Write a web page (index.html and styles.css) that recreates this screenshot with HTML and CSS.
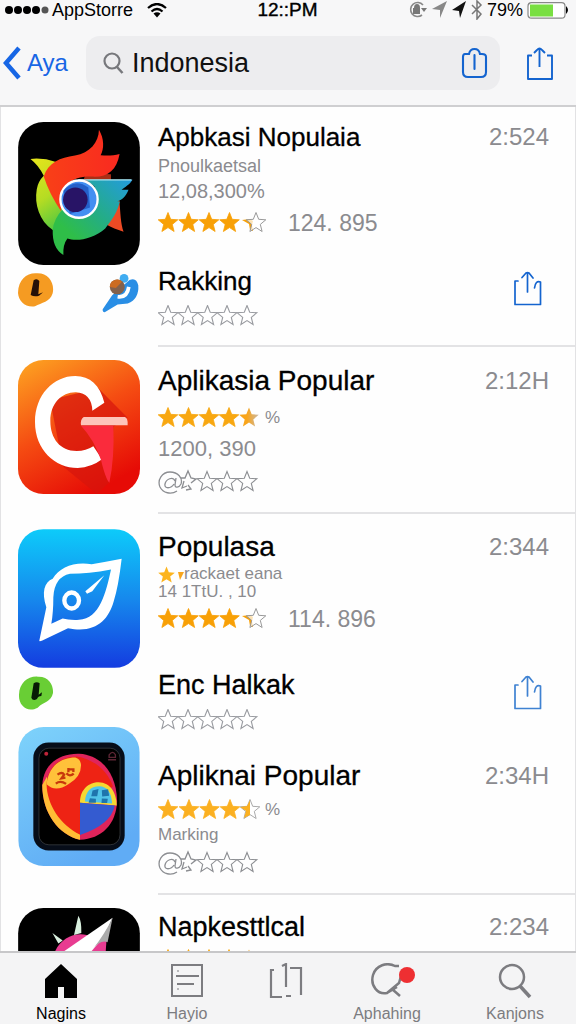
FILE: index.html
```html
<!DOCTYPE html>
<html lang="id">
<head>
<meta charset="utf-8">
<meta name="viewport" content="width=device-width, initial-scale=1">
<title>AppStore</title>
<link rel="stylesheet" href="styles.css">
</head>
<body>
<svg class="defs" aria-hidden="true">
  <defs>
    <path id="star" d="M10 .5 12.7 7.3 19.8 7.8 14.3 12.4 16.1 19.5 10 15.6 3.9 19.5 5.7 12.4 .2 7.8 7.3 7.3Z"/>
    <linearGradient id="fade" x1="0" x2="1"><stop offset=".4" stop-color="#f9a51a"/><stop offset="1" stop-color="#c9b9a8"/></linearGradient>
    <symbol id="rated" viewBox="0 0 110 22">
      <g fill="#f8a006" stroke="#f8a006" stroke-width=".8"><use href="#star"/><use href="#star" x="20.5"/><use href="#star" x="41"/><use href="#star" x="61.500"/></g>
      <path fill="#f8a006" d="M84 8l8-1 3 2-1 4 1 6-3-1-1-6z"/>
      <use href="#star" x="88" fill="#fff" fill-opacity=".7" stroke="#999"/>
    </symbol>
    <symbol id="full" viewBox="0 0 110 22">
      <g fill="#f8a710" stroke="#f8a710" stroke-width=".8"><use href="#star"/><use href="#star" x="20.500"/><use href="#star" x="41"/><use href="#star" x="61"/></g>
      <use href="#star" x="81" fill="url(#fade)"/>
    </symbol>
    <symbol id="most" viewBox="0 0 110 22">
      <g fill="#fbb021" stroke="#fbb021" stroke-width=".8"><use href="#star"/><use href="#star" x="21"/><use href="#star" x="41.500"/><use href="#star" x="62"/></g>
      <use href="#star" x="82" fill="#fff" stroke="#aaa"/>
      <path fill="#fbb021" d="M82 8l7-1 3-6v15l-6 3 2-7z"/>
    </symbol>
    <symbol id="empty" viewBox="0 0 110 22">
      <g fill="#fff" stroke="#999ba0" stroke-width="1.100"><use href="#star"/><use href="#star" x="20"/><use href="#star" x="39.500"/><use href="#star" x="59"/><use href="#star" x="79"/></g>
    </symbol>
    <symbol id="atstars" viewBox="0 0 110 26">
      <g fill="none" stroke="#8c8e92" stroke-width="1.300">
        <path d="M19 22C13 26 5 24 2 18-1 11 4 3 12 3c8 0 13 6 11 12-2 4-6 4-6 1l1-7M17 12c-2-5-9-2-10 3-1 5 6 5 9 0M23 9l4 0 3-7 3 7 5 1-5 4M26 12l-2 7 5-2M30 16l3 4-5 1"/>
        <g stroke-width="1.100"><use href="#star" x="39" y="2"/><use href="#star" x="59" y="2"/><use href="#star" x="79" y="2"/></g>
      </g>
    </symbol>
    <symbol id="upload" viewBox="0 0 30 36">
      <path fill="none" stroke="currentColor" stroke-width="1.700" stroke-linejoin="round" stroke-linecap="round" d="M5 10H2v23.500h25.500V11q-5-2-6 6M14.500 21V2M9 6.500 13 2q1.500-1 3 0l4 5"/>
    </symbol>
  </defs>
</svg>

<div class="app">
  <header class="top">
    <div class="status">
      <div class="status-left">
        <svg width="45" height="10" viewBox="0 0 45 10"><circle cx="4" cy="5" r="4"/><circle cx="13" cy="5" r="4"/><circle cx="22" cy="5" r="4"/><circle cx="31" cy="5" r="4"/><circle cx="40" cy="5" r="3.500" fill="#555"/></svg>
        <span>AppStorre</span>
        <svg class="wifi" width="20" height="15" viewBox="0 0 20 15"><g fill="none" stroke="#000" stroke-width="2.200"><path d="M1 5q9-8 18 0M4.500 8.500q5.500-5 11 0"/></g><path d="M6.500 10.500q3.500-2.500 7 0L10 14.500z"/></svg>
      </div>
      <span class="clock">12::PM</span>
      <div class="status-right">
        <svg width="20" height="18" viewBox="0 0 20 18"><path d="M15 4A7 7 0 1 0 14 14" fill="none" stroke="#888" stroke-width="1.600"/><path d="M13 7h6l-3 4zM5 7h1q0-4 3-4t3 4v6H5z" fill="#777"/></svg>
        <svg width="15" height="18" viewBox="0 0 15 18"><path d="M0 8 15 0 8 17 8 9z" fill="#888"/></svg>
        <svg width="16" height="18" viewBox="0 0 16 18"><path d="M1 9 15 0 9 17 8 10z" fill="#111"/></svg>
        <svg width="12" height="20" viewBox="0 0 12 20"><path d="M1 5 10 14 6 19V1l4 4-9 9" fill="none" stroke="#777" stroke-width="1.500"/></svg>
        <span>79%</span>
        <svg width="43" height="17" viewBox="0 0 43 17"><rect x="1" y=".7" width="37" height="15.500" rx="3.500" fill="#fff" stroke="#888" stroke-width="1.200"/><rect x="3" y="2.500" width="23" height="12" fill="#79df42"/><path d="M39 4q4 4 0 8z"/></svg>
      </div>
    </div>
    <nav class="nav">
      <a class="back" href="#"><svg width="20" height="34" viewBox="0 0 20 34"><path d="M17 2 4 17l13 15" fill="none" stroke="currentColor" stroke-width="4.500"/></svg>Aya</a>
      <div class="search">
        <svg width="21" height="22" viewBox="0 0 21 22"><circle cx="9" cy="9" r="7.500" fill="none" stroke="#77787c" stroke-width="2.200"/><path d="m14 15 5.500 6" stroke="#77787c" stroke-width="2.500"/></svg>
        <input type="text" value="Indonesia" aria-label="Cari">
        <button class="icon-btn" aria-label="Simpan"><svg width="27" height="32" viewBox="0 0 27 32"><path d="M7 7H4Q2 7 2 10v15q0 5 5 5h13q5 0 5-5V10q0-3-4-3h-2q-1-5-5.500-5T8 7zM13.500 8v14" fill="none" stroke="currentColor" stroke-width="2.100" stroke-linecap="round"/></svg></button>
      </div>
      <button class="icon-btn" aria-label="Bagikan"><svg width="28" height="35" viewBox="0 0 28 35"><path d="M6 9.500H2V33h24V9.500h-5M13.500 21V2M8 7l3-3q2.500-3 5 0l3 3" fill="none" stroke="currentColor" stroke-width="1.900" stroke-linejoin="round"/></svg></button>
    </nav>
  </header>

  <main class="list">
    <article class="row">
      <div class="art">
        <svg class="icon" viewBox="54 38 366 430">
          <defs><linearGradient id="bird" x1="0" y1="1" x2="1" y2="0"><stop offset=".25" stop-color="#2fbe48"/><stop offset=".55" stop-color="#24ad84"/><stop offset="1" stop-color="#239be0"/></linearGradient><linearGradient id="lime" x1="0" y1="0" x2="0.500" y2="1"><stop stop-color="#e8e51b"/><stop offset=".5" stop-color="#b5dc23"/><stop offset="1" stop-color="#37c348"/></linearGradient><linearGradient id="flame" x1="1" x2="0"><stop stop-color="#f92a20"/><stop offset="1" stop-color="#f94017"/></linearGradient></defs>
          <rect x="54" y="38" width="366" height="430" rx="76"/>
          <path d="M358 270C362 315 362 340 371 368 350 362 335 355 322 348Z" fill="#ec4a24"/>
          <path d="M255 200q50-8 78-5v25h-85z" fill="#a92e16"/>
          <path d="M91 149Q130 145 168 158L183 180 260 300 245 385 170 372 158 363C118 335 102 285 110 240Q114 217 131 200Q116 168 91 149Z" fill="url(#lime)"/>
          <path d="M398 212C388 228 376 233 365 242H386C377 263 368 271 353 277H360C348 325 322 347 316 358 280 390 230 398 202 388Q188 407 190 438 156 418 158 363 160 330 188 300Q222 340 270 315 307 280 283 231L258 212Z" fill="url(#bird)"/>
          <path d="M131 202C145 160 180 145 225 139 270 130 296 100 297 61 313 88 313 118 302 138 324 140 341 139 359 134 350 185 321 205 275 202 215 200 185 225 183 306Q148 255 131 202Z" fill="url(#flame)"/>
          <path d="M235 212h160" stroke="#a9e4ef" stroke-width="4"/>
          <circle cx="237" cy="270" r="56" fill="#438ff2" stroke="#fff" stroke-width="7"/><path d="M190 245q35-40 75-10l5 60-60 20z" fill="#2460c9"/><circle cx="226" cy="272" r="37" fill="#281466"/>
        </svg>
        <div class="badges">
          <svg width="36" height="36" viewBox="54 490 108 108"><path d="M54 550C55 510 80 490 108 491 145 488 165 520 158 551 150 577 125 579 105 590 75 594 56 575 54 550Z" fill="#f59b22"/><path d="M101 512q10-7 17 2l-3 40 14-6-12 10q-14 4-25-2z" fill="#251008"/></svg>
          <svg width="38" height="40" viewBox="304 494 112 118"><path d="M312 610Q305 610 306 601L334 560 385 515Q405 505 411 530 414 570 380 584L350 587Z" fill="#298ee5"/><path d="M350 564q28 4 33-29" fill="none" stroke="#fff" stroke-width="11"/><circle cx="369" cy="510" r="13" fill="#40acf1"/><circle cx="349" cy="535" r="22" fill="#83614c"/><path d="M327 535a21 21 0 0 1 36-15l-18 18z" fill="#cc6c22"/></svg>
        </div>
      </div>
      <div class="body lined first">
        <div class="line"><h2 class="name">Apbkasi Nopulaia</h2><time class="time">2:524</time></div>
        <p class="sub">Pnoulkaetsal</p>
        <p class="meta">12,08,300%</p>
        <div class="line score"><svg class="stars"><use href="#rated"/></svg><span class="count">124. 895</span></div>
        <div class="extra"><div><h3 class="name">Rakking</h3><svg class="stars"><use href="#empty"/></svg></div><button class="icon-btn" aria-label="Bagikan"><svg class="share"><use href="#upload"/></svg></button></div>
      </div>
    </article>

    <article class="row">
      <div class="art tight">
        <svg class="icon mid" viewBox="54 60 366 402">
          <defs><linearGradient id="red" x1=".1" y1="0" x2=".6" y2="1"><stop stop-color="#fda021"/><stop offset=".5" stop-color="#f54c12"/><stop offset="1" stop-color="#e60b06"/></linearGradient></defs>
          <rect x="54" y="60" width="366" height="402" rx="76" fill="url(#red)"/>
          <path d="M295 145 383 233 340 260 330 425 290 462 190 380 150 180Z" fill="#d5160d" opacity=".7"/>
          <path d="M313 188C300 135 270 108 226 108 160 108 105 165 105 246 105 330 165 384 233 384Q275 382 306 358L280 319Q258 333 230 333C180 333 151 295 151 243 151 190 186 156 228 157Q275 160 277 212Z" fill="#fff"/>
          <path d="M243 257H340Q344 355 328 428 317 418 303 360 283 300 243 257Z" fill="#fa2b3c"/>
          <path d="M251 231H374Q384 232 383 256H243Q240 239 251 231Z" fill="#fdc4ba"/>
        </svg>
      </div>
      <div class="body lined second">
        <div class="line"><h2 class="name">Aplikasia Popular</h2><time class="time">2:12H</time></div>
        <div class="line pct"><svg class="stars"><use href="#full"/></svg><span>%</span></div>
        <p class="meta large">1200, 390</p>
        <svg class="stars at"><use href="#atstars"/></svg>
      </div>
    </article>

    <article class="row">
      <div class="art">
        <svg class="icon tall" viewBox="54 46 366 416">
          <defs><linearGradient id="sky" x1="0" y1="0" x2="0" y2="1"><stop stop-color="#0dcbfa"/><stop offset=".5" stop-color="#1689ed"/><stop offset="1" stop-color="#143ce0"/></linearGradient></defs>
          <rect x="54" y="46" width="366" height="416" rx="76" fill="url(#sky)"/>
          <path d="M365 135Q320 144 275 151C220 143 180 160 158 195 133 205 124 235 139 280L118 380Q117 385 127 380L204 343C285 360 325 320 341 263Q355 220 365 135ZM333 167C318 235 300 315 237 318 215 320 201 316 188 314L154 330Q160 295 160 250 163 190 210 180 265 180 333 167Z" fill="#fff" fill-rule="evenodd"/>
          <ellipse cx="215" cy="260" rx="22" ry="24" fill="none" stroke="#fff" stroke-width="13"/><path d="M313 184 256 232 261 240 277 232Z" fill="#fff"/>
        </svg>
        <div class="badges"><svg width="36" height="36" viewBox="54 484 108 108"><path d="M57 540C58 505 84 484 113 486 146 484 161 511 159 535 153 563 132 560 113 579 83 595 55 574 57 540Z" fill="#69ce35"/><path d="M101 506q9-7 18 0l-3 34 10-7-2 11q-10 0-13 9-13 7-17-4z" fill="#071b05"/></svg></div>
      </div>
      <div class="body third">
        <div class="line"><h2 class="name">Populasa</h2><time class="time">2:344</time></div>
        <p class="sub small"><svg width="26" height="17" viewBox="0 0 26 17"><use href="#star" transform="scale(.85)" fill="#fcb41d"/><path d="M20 6h6l-4 8z" fill="#f8a51c"/></svg>rackaet eana</p>
        <p class="sub small">14 1TtU. , 10</p>
        <div class="line score"><svg class="stars"><use href="#rated"/></svg><span class="count">114. 896</span></div>
        <div class="extra"><div><h3 class="name">Enc Halkak</h3><svg class="stars"><use href="#empty"/></svg></div><button class="icon-btn soft" aria-label="Bagikan"><svg class="share"><use href="#upload"/></svg></button></div>
      </div>
    </article>

    <article class="row">
      <div class="art flush">
        <svg class="icon tall" viewBox="54 40 366 420">
          <defs><linearGradient id="pale" x1="0" y1="0" x2=".5" y2="1"><stop stop-color="#7ed3fb"/><stop offset="1" stop-color="#60acf5"/></linearGradient></defs>
          <rect x="54" y="40" width="366" height="420" rx="76" fill="url(#pale)"/>
          <rect x="99" y="87" width="276" height="326" rx="46" fill="#070d19"/><rect x="116" y="104" width="245" height="292" rx="30" fill="#000" stroke="#44484b" stroke-width="2"/>
          <path d="M240 381C175 365 126 300 126 215 130 150 180 119 238 121 305 125 350 180 352 263 350 335 305 378 240 381Z" fill="#df245b"/>
          <path d="M240 381C175 365 126 300 126 215L140 190Q170 325 240 365Z" fill="#ffbd35"/>
          <path d="M240 365C180 335 140 275 139 212 145 153 185 130 230 129 280 137 323 170 340 220L240 280Z" fill="#ee2314"/>
          <path d="M139 213C145 160 180 132 226 132Q241 136 243 153 245 190 206 212 166 239 139 213Z" fill="#ffc13a"/>
          <path d="M172 184q14-10 20 0l-8 11 12-2M167 211q14-11 31 1M199 180q10 12 22 1M205 164v13m0-9h15v8" fill="none" stroke="#c8380c" stroke-width="7"/>
          <path d="M240 269C239 227 269 207 296 207 333 208 350 240 351 277Z" fill="#f6d832"/><path d="M255 265q3-45 43-46 36 1 39 52z" fill="#51c4e9"/><path d="M278 232l18-5-4 22h-18zM306 231l19-3 3 20-21 2zM270 255l18 2v12h-22zM306 256l18 1-2 13h-17z" fill="#1e75ad"/>
          <path d="M240 269 345 277Q334 335 240 366Z" fill="#345bd0"/><circle cx="138" cy="121" r="6" fill="#bf2439"/><path d="M328 132v-8q11-15 19 0v8zM325 139h24" fill="none" stroke="#5d2635" stroke-width="4"/>
        </svg>
      </div>
      <div class="body lined fourth">
        <div class="line"><h2 class="name">Apliknai Popular</h2><time class="time">2:34H</time></div>
        <div class="line pct"><svg class="stars"><use href="#most"/></svg><span>%</span></div>
        <p class="sub small">Marking</p>
        <svg class="stars at"><use href="#atstars"/></svg>
      </div>
    </article>

    <article class="row">
      <div class="art tight">
        <svg class="icon" viewBox="54 37 366 430">
          <rect x="54" y="37" width="366" height="430" rx="76"/>
          <path d="M163 172C180 130 220 110 260 118L320 130 317 172Z" fill="#e83c91"/>
          <path d="M157 112 188 135 175 144ZM235 60q10 15 9 52l-22 6z" fill="#d9f0df"/>
          <path d="M338 66 185 172H270Q315 125 338 66Z" fill="#fff"/><path d="M338 66 323 140Q300 130 270 172Q315 115 338 66Z" fill="#aaa"/>
        </svg>
      </div>
      <div class="body fifth">
        <div class="line"><h2 class="name">Napkesttlcal</h2><time class="time">2:234</time></div>
        <svg class="stars"><use href="#full"/></svg>
      </div>
    </article>
  </main>

  <footer class="tabs">
    <button class="tab active"><svg width="34" height="36" viewBox="0 0 34 36"><path d="M17 1 33 16V35H20V24H14V35H1V16Z" fill="currentColor"/></svg>Nagins</button>
    <button class="tab"><svg width="34" height="36" viewBox="0 0 34 36"><path d="M2 2h30v31H2zM6 13h23M7 21h17" fill="none" stroke="currentColor" stroke-width="2"/><path d="M8 7v2M8 25v2" stroke="currentColor"/></svg>Hayio</button>
    <button class="tab" aria-label="Unggah"><svg width="34" height="36" viewBox="0 0 34 36"><path d="M5 7H2v27h11M17 24V1l-4 2M21 5h11v27M17 33h5" fill="none" stroke="currentColor" stroke-width="2.200"/></svg></button>
    <button class="tab"><svg class="notice" width="44" height="36" viewBox="0 0 44 36"><path d="M28 3h-4C16-1 5 2 2 12-1 23 7 32 16 30L28 20 30 13M21 26l8 7M16 30l10-6" fill="none" stroke="currentColor" stroke-width="2.500"/><circle cx="36" cy="12" r="8" fill="#ee2f32"/></svg>Aphahing</button>
    <button class="tab"><svg width="34" height="36" viewBox="0 0 34 36"><circle cx="14" cy="14" r="12" fill="none" stroke="currentColor" stroke-width="2.500"/><path d="m22 23 10 11" stroke="currentColor" stroke-width="3.500"/></svg>Kanjons</button>
  </footer>
</div>
</body>
</html>
```
FILE: styles.css
```css
* { box-sizing: border-box; }
body { margin: 0; font-family: "Liberation Sans", Arial, sans-serif; color: #000; }
h2, h3, p { margin: 0; font-weight: 400; }
svg { display: block; flex: none; }
button { border: 0; padding: 0; background: none; font: inherit; color: inherit; }
.defs { position: absolute; width: 0; height: 0; }

.app { display: flex; flex-direction: column; height: 100vh; background: #fefefe; }

.top { flex: none; background: #f7f7f8; border-bottom: 2px solid #cfcfd1; }
.status { display: grid; grid-template-columns: 1fr auto 1fr; align-items: center; height: 18px; padding: 0 6px 0 5px; font-size: 18px; line-height: 18px; }
.status-left, .status-right { display: flex; align-items: center; gap: 2px; }
.status-right { justify-content: flex-end; gap: 4px; }
.wifi { margin-left: 12px; }
.clock { font-size: 19px; -webkit-text-stroke: 0.4px #000; }

.nav { display: flex; align-items: center; padding: 18px 22px 15px 2px; }
.back { display: flex; flex: none; align-items: center; gap: 5px; width: 84px; color: #1766e5; font-size: 24px; text-decoration: none; }
.search { display: flex; flex: 1; align-items: center; gap: 8px; min-width: 0; height: 54px; margin-right: 26px; padding: 0 12px 0 17px; border-radius: 14px; background: #ededef; }
.search input { flex: 1; min-width: 0; padding: 0; border: 0; outline: 0; background: transparent; color: #111; font: inherit; font-size: 27px; }
.icon-btn { color: #1464cf; }
.soft { color: #3f82d2; }

.list { flex: 1; min-height: 0; overflow: hidden; border: solid #e2e2e4; border-width: 0 1px; }
.row { display: flex; gap: 18px; padding-left: 17px; }
.art { flex: none; width: 122px; padding-top: 15px; }
.tight { padding-top: 13px; }
.flush { padding-top: 0; }
.icon { width: 122px; height: 143px; }
.mid { height: 134px; }
.tall { height: 139px; }
.badges { display: flex; justify-content: space-between; padding-top: 8px; }

.body { flex: 1; min-width: 0; }
.lined { border-bottom: 2px solid #e3e3e5; }
.first { padding: 12px 0 18px; }
.second { padding: 16px 0 17px; }
.third { margin-bottom: -4px; padding-top: 15px; }
.fourth { padding: 31px 0 17px; }
.fifth { padding-top: 14px; }
.line { display: flex; align-items: center; }
.name { font-size: 28px; line-height: 36px; -webkit-text-stroke: 0.3px #000; }
.first .name { font-size: 26px; }
.third h3, .fifth .name { font-size: 27px; }
.time { margin-left: auto; padding-right: 26px; color: #8b8b8f; font-size: 24px; line-height: 36px; }
.sub { display: flex; align-items: center; color: #8b8b8f; font-size: 18px; line-height: 22px; }
.small { font-size: 17px; line-height: 18px; }
.meta { color: #8b8b8f; font-size: 20px; line-height: 28px; }
.large { font-size: 22px; line-height: 24px; }
.stars { width: 110px; height: 22px; }
.at { height: 26px; margin-top: 8px; }
.fourth .at { margin-top: 6px; }
.fifth .stars { margin-top: 4px; }
.score { height: 36px; }
.count { margin-left: 20px; color: #8b8b8f; font-size: 23px; }
.pct { height: 38px; color: #8b8b8f; font-size: 17px; }
.fourth .pct { height: 32px; }
.pct span { margin-left: -3px; }
.extra { display: flex; align-items: flex-start; justify-content: space-between; padding: 22px 32px 0 0; }
.third .extra { padding-top: 30px; }
.extra .stars { margin-top: 6px; }
.extra .icon-btn { margin-top: 8px; }
.share { width: 30px; height: 36px; }

.tabs { display: grid; flex: none; grid-template-columns: 122fr 130fr 68fr 134fr 122fr; height: 73px; padding-top: 10px; border-top: 2px solid #c7c7c9; background: #f4f4f5; }
.tab { display: flex; flex-direction: column; align-items: center; gap: 5px; color: #7c7c80; font-size: 16px; line-height: 20px; }
.active { color: #000; }
.notice { margin-left: 12px; }
```
